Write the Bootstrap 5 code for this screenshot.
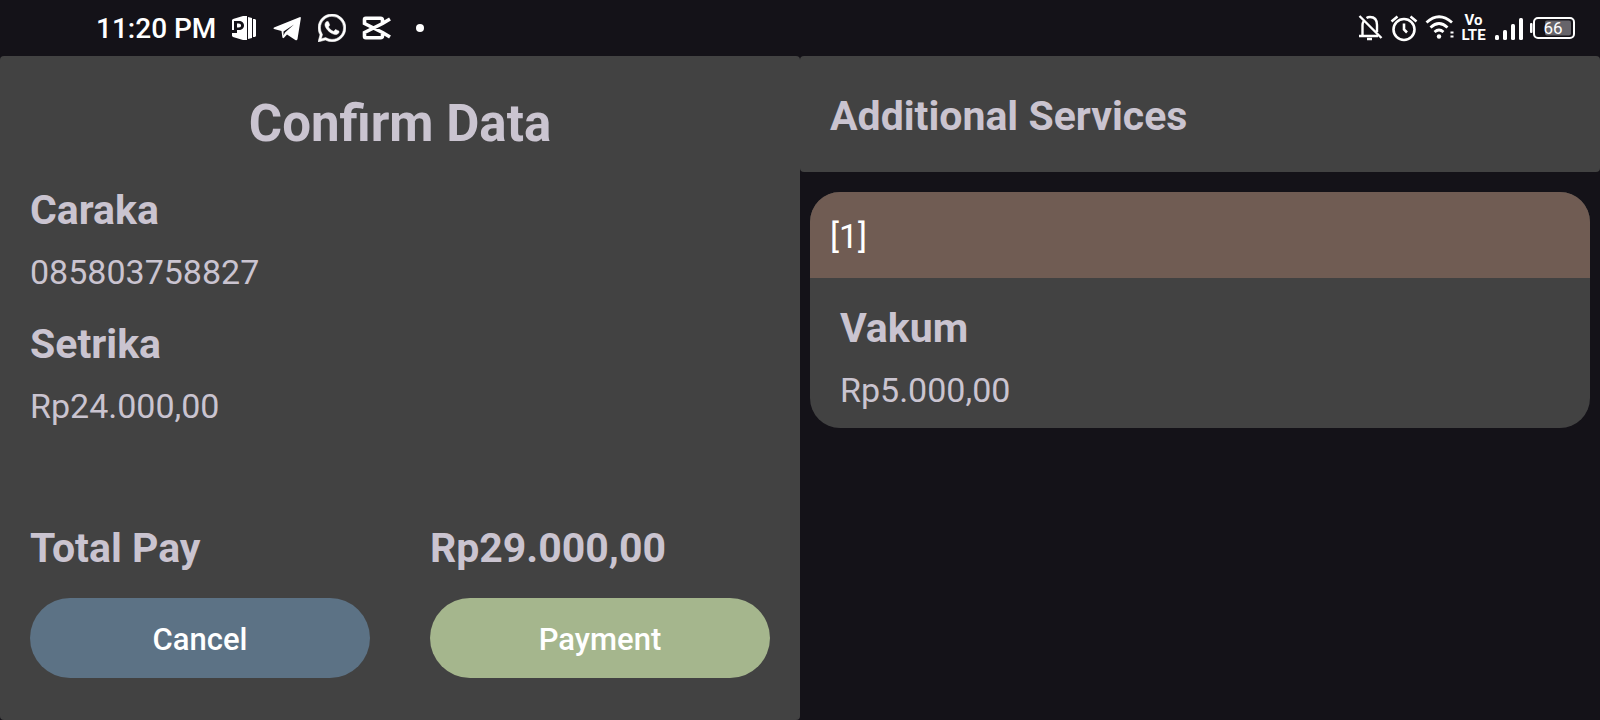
<!DOCTYPE html>
<html lang="en">
<head>
<meta charset="utf-8">
<meta name="viewport" content="width=device-width, initial-scale=1">
<title>Confirm Data</title>
<link rel="stylesheet" href="https://cdn.jsdelivr.net/npm/bootstrap@5.3.0/dist/css/bootstrap.min.css">
<style>
  body { background: #141218; color: #cac4d0; font-family: Roboto, "Liberation Sans", sans-serif; font-size: 34px; line-height: 40px; }
  .status-bar { height: 56px; padding: 0 25px 0 96px; color: #fff; }
  .clock { font-size: 28px; line-height: 32px; font-weight: 500; padding-top: 2px; }
  .notices { gap: 16px; }
  .indicators { gap: 7px; }
  .volte { font-size: 15px; line-height: 15px; font-weight: 700; width: 25px; }
  .charge { fill: #fff; font-size: 17px; }
  .panel { background: #424242; border-radius: 4px; }
  .summary { padding: 38px 30px 42px; }
  .screen-title { font-size: 51px; line-height: 60px; font-weight: 700; margin: 0 0 31px; }
  .item-title { font-size: 41px; line-height: 50px; font-weight: 700; margin: 0 0 17px; }
  .item + .item { margin-top: 27px; }
  .col-gap { --bs-gutter-x: 60px; }
  .total { margin-bottom: 25px; }
  .action { height: 80px; border: 0; border-radius: 40px; color: #fff; font-size: 31px; line-height: 38px; font-weight: 500; padding: 10px 12px 6px; }
  .action-cancel, .action-cancel:hover { background: #5c7285; color: #fff; }
  .action-pay, .action-pay:hover { background: #a5b68d; color: #fff; }
  .services-head { padding: 35px 30px 31px; }
  .service { background: #424242; border-radius: 30px; margin: 20px 10px; overflow: hidden; }
  .service-head { background: #705c53; color: #fff; padding: 24px 20px 22px; }
  .service-body { padding: 25px 30px 18px; }
</style>
</head>
<body>
<div class="d-flex flex-column min-vh-100">
  <header class="status-bar d-flex justify-content-between align-items-center">
    <div class="notices d-flex align-items-center">
      <span class="clock">11:20 PM</span>
      <svg width="24" height="28" viewBox="0 0 24 28" fill="#fff" aria-hidden="true">
        <path fill-rule="evenodd" d="M0 6 1 5 11 2h4v24h-4L1 23 0 22V19h5v-3h2c3 0 5-2 5-4.500S10 7 7 7H2v9H0zM5 9.500h1.500c2 0 2.500 1 2.500 2s-.5 2-2.500 2H5z"/>
        <path d="M16 3l4 1v20l-4 1zM21 5l2 0 1 1v16l-1 1h-2z"/>
      </svg>
      <svg width="30" height="28" viewBox="0 0 30 28" fill="#fff" aria-hidden="true"><path d="M2 13.500 27.500 3.200q1.600-.5 1.300 1.200L25.500 25q-.5 2-2.200 1L15 20.500l-3 3.300q-1.500 1.200-1.700-1L9.500 17 2 15q-1.200-.7 0-1.500z"/><path d="M11.500 17.500 22 10.500 13 18.500l-1.500 3z" fill="#141218"/></svg>
      <svg width="28" height="28" viewBox="0 0 16 16" fill="#fff" stroke="#fff" stroke-width=".3" aria-hidden="true"><path d="M13.601 2.326A7.854 7.854 0 0 0 7.994 0C3.627 0 .068 3.558.064 7.926c0 1.399.366 2.760 1.057 3.965L0 16l4.204-1.102a7.933 7.933 0 0 0 3.790.965h.004c4.368 0 7.926-3.558 7.930-7.930A7.898 7.898 0 0 0 13.600 2.326zM7.994 14.521a6.573 6.573 0 0 1-3.356-.920l-.240-.144-2.494.654.666-2.433-.156-.251a6.560 6.560 0 0 1-1.007-3.505c0-3.626 2.957-6.584 6.591-6.584a6.560 6.560 0 0 1 4.660 1.931 6.557 6.557 0 0 1 1.928 4.660c-.004 3.639-2.961 6.592-6.592 6.592zm3.615-4.934c-.197-.099-1.170-.578-1.353-.646-.182-.065-.315-.099-.445.099-.133.197-.513.646-.627.775-.114.133-.232.148-.430.050-.197-.100-.836-.308-1.592-.985-.590-.525-.985-1.175-1.103-1.372-.114-.198-.011-.304.088-.403.087-.088.197-.232.296-.346.100-.114.133-.198.198-.330.065-.134.034-.248-.015-.347-.050-.099-.445-1.076-.612-1.470-.160-.389-.323-.335-.445-.340-.114-.007-.247-.007-.380-.007a.729.729 0 0 0-.529.247c-.182.198-.691.677-.691 1.654 0 .977.710 1.916.810 2.049.098.133 1.394 2.132 3.383 2.992.470.205.840.326 1.129.418.475.152.904.129 1.246.080.380-.058 1.171-.480 1.338-.943.164-.464.164-.860.114-.943-.049-.084-.182-.133-.380-.232z"/></svg>
      <svg width="29" height="28" viewBox="0 0 29 28" fill="none" stroke="#fff" stroke-width="3.600" aria-hidden="true"><path d="M28 5 20.500 9.500 2.500 18.500V22.500q0 1.200 1.200 1.200H18.500q2 0 2-2v-3M28 23 20.500 18.500 2.500 9.500V5.500q0-1.200 1.200-1.200H18.500q2 0 2 2v3"/></svg>
      <svg width="28" height="28" viewBox="0 0 28 28" aria-hidden="true"><circle cx="13" cy="14" r="4" fill="#fff"/></svg>
    </div>
    <div class="indicators d-flex align-items-center">
      <svg width="25" height="28" viewBox="0 0 25 28" fill="none" stroke="#fff" stroke-width="2.400" aria-hidden="true"><path d="M1.500 2 23.500 24M1 22h19M4.500 22V11q0-2 1.200-4M8.500 4Q10 3 12 3q7 0 7 8v7"/><path d="M9 25h5" stroke-width="2.500"/></svg>
      <svg width="28" height="28" viewBox="0 0 28 28" fill="none" stroke="#fff" stroke-width="2.600" aria-hidden="true"><circle cx="14" cy="15.500" r="10.500"/><path d="M14 9.500v6l3 3M1.500 7.500 7.500 2.500M26.500 7.500l-6-5"/></svg>
      <svg width="29" height="28" viewBox="0 0 29 28" fill="none" stroke="#fff" stroke-width="2.800" aria-hidden="true"><path d="M1.500 8.500Q14-3 27 8.500M5.500 13.500q8.500-8 17 0M9.500 18q4.500-4 9 0"/><circle cx="14" cy="22.500" r="2.200" fill="#fff" stroke="none"/><path d="M25.500 18.500h3M25.500 22.500h3" stroke-width="2.200"/></svg>
      <div class="volte text-center">Vo<br>LTE</div>
      <svg width="30" height="28" viewBox="0 0 30 28" fill="#fff" aria-hidden="true"><rect x="2" y="21" width="4" height="5" rx="1.500"/><rect x="10" y="16" width="4" height="10" rx="1.500"/><rect x="18" y="10" width="4" height="16" rx="1.500"/><rect x="26" y="4" width="4" height="22" rx="1.500"/></svg>
      <svg width="45" height="28" viewBox="0 0 45 28" role="img" aria-label="Battery 66 percent"><rect x="0" y="9" width="2.500" height="10" rx="1" fill="#fff"/><rect x="4" y="4" width="40" height="20" rx="4" fill="none" stroke="#fff" stroke-width="2"/><rect x="15" y="6.500" width="26" height="15" rx="2" fill="#66646a"/><text class="charge" x="23" y="20" text-anchor="middle">66</text></svg>
    </div>
  </header>

  <main class="row g-0 flex-grow-1">
    <section class="col-6 panel summary d-flex flex-column">
      <h1 class="screen-title text-center">Confirm Data</h1>
      <div class="item">
        <h2 class="item-title">Caraka</h2>
        <div>085803758827</div>
      </div>
      <div class="item">
        <h2 class="item-title">Setrika</h2>
        <div>Rp24.000,00</div>
      </div>
      <div class="row col-gap mt-auto">
        <div class="col-6"><div class="item-title total">Total Pay</div></div>
        <div class="col-6"><div class="item-title total">Rp29.000,00</div></div>
        <div class="col-6"><button type="button" class="btn action action-cancel w-100">Cancel</button></div>
        <div class="col-6"><button type="button" class="btn action action-pay w-100">Payment</button></div>
      </div>
    </section>
    <section class="col-6">
      <div class="panel services-head">
        <h2 class="item-title mb-0">Additional Services</h2>
      </div>
      <article class="service">
        <div class="service-head">[1]</div>
        <div class="service-body">
          <h3 class="item-title">Vakum</h3>
          <div>Rp5.000,00</div>
        </div>
      </article>
    </section>
  </main>
</div>
<script src="https://cdn.jsdelivr.net/npm/bootstrap@5.3.0/dist/js/bootstrap.bundle.min.js"></script>
</body>
</html>
